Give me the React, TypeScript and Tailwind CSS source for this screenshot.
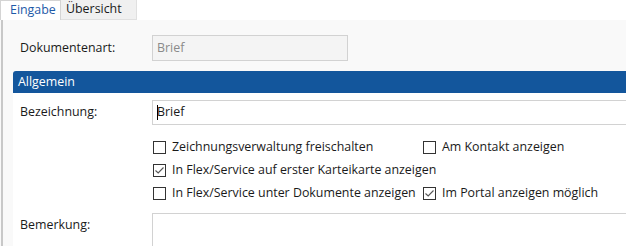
import React from "react";

const Check = ({ checked }: { checked?: boolean }) => (
  <span className="flex h-[13px] w-[13px] shrink-0 items-center justify-center border border-[#333] bg-white">
    {checked && (
      <svg width="11" height="11" viewBox="0 0 11 11">
        <path d="M1.5 5.5 L4.2 8 L9.5 2.5" fill="none" stroke="#555" strokeWidth="1.1" />
      </svg>
    )}
  </span>
);

const Option = ({ label, checked }: { label: string; checked?: boolean }) => (
  <label className="flex items-center gap-[6px] whitespace-nowrap">
    <Check checked={checked} />
    <span>{label}</span>
  </label>
);

export default function App() {
  return (
    <div
      className="h-[246px] w-[626px] overflow-hidden bg-[#f9f9f9] text-[12.4px] text-[#1a1a1a]"
      style={{ fontFamily: '"Segoe UI", "Open Sans", "Noto Sans", sans-serif' }}
    >
      {/* TABS */}
      <div className="flex h-[20px] bg-white">
        <div className="flex w-[61px] items-center border-l border-t border-r border-[#d4d4d4] bg-white pl-[9px] text-[#1e5aa8]">
          Eingabe
        </div>
        <div className="flex w-[76px] items-center border-b border-r border-[#e0e0e0] bg-[#f0f0f0] pl-[5px]">
          Übersicht
        </div>
      </div>

      {/* CONTENT */}
      <div className="ml-px h-full border-l-2 border-[#c8c8c8] pl-[10px]">
        <div className="flex h-[51px] items-center pt-[5px]">
          <span className="w-[139px] pl-[7px]">Dokumentenart:</span>
          <div className="flex h-[26px] w-[196px] items-center border border-[#d2d2d2] bg-[#f4f4f4] pl-[4px] text-[#8a8a8a]">
            Brief
          </div>
        </div>

        <div className="flex h-[22px] items-center rounded-tl-[3px] bg-[#13569c] pl-[5px] text-white">Allgemein</div>

        <div className="bg-white pl-[7px] pt-[7px]">
          <div className="flex h-[25px] items-center">
            <span className="w-[132px]">Bezeichnung:</span>
            <div className="flex h-[25px] flex-1 items-center border-y border-l border-[#d2d2d2] pl-[4px]">
              <span className="mr-[-1px] inline-block h-[15px] w-px bg-black"></span>
              Brief
            </div>
          </div>

          <div className="ml-[133px] mt-[11px] flex flex-col">
            <div className="flex h-[23px] items-center">
              <div className="w-[270px]">
                <Option label="Zeichnungsverwaltung freischalten" />
              </div>
              <Option label="Am Kontakt anzeigen" />
            </div>
            <div className="flex h-[23px] items-center">
              <Option label="In Flex/Service auf erster Karteikarte anzeigen" checked />
            </div>
            <div className="flex h-[23px] items-center">
              <div className="w-[270px]">
                <Option label="In Flex/Service unter Dokumente anzeigen" />
              </div>
              <Option label="Im Portal anzeigen möglich" checked />
            </div>
          </div>

          <div className="mt-[8px] flex">
            <span className="w-[132px] pt-[3px]">Bemerkung:</span>
            <div className="h-[60px] flex-1 border-l border-t border-[#d2d2d2]"></div>
          </div>
        </div>
      </div>
    </div>
  );
}
